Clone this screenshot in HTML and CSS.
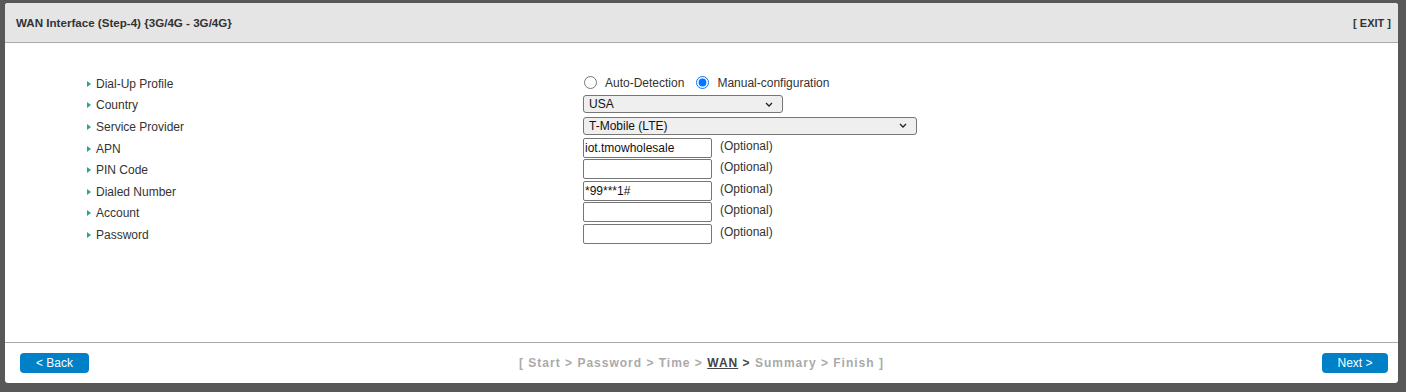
FILE: index.html
```html
<!DOCTYPE html>
<html lang="en">
  <head>
    <meta charset="UTF-8" />
    <title>WAN Interface (Step-4)</title>
    <link rel="stylesheet" href="styles.css">
  </head>
  <body>
    <div class="panel">
      <div class="panel-head">
        <span class="title">WAN Interface (Step-4) {3G/4G - 3G/4G}</span>
        <a class="exit" href="#">[ EXIT ]</a>
      </div>

      <form class="panel-body">
        <div class="form-grid">
          <div class="label">Dial-Up Profile</div>
          <div class="field">
            <label class="radio"><input type="radio" name="profile" /> Auto-Detection</label>
            <label class="radio"><input type="radio" name="profile" checked /> Manual-configuration</label>
          </div>

          <div class="label">Country</div>
          <div class="field">
            <select class="sel country"><option>USA</option></select>
          </div>

          <div class="label">Service Provider</div>
          <div class="field">
            <select class="sel provider"><option>T-Mobile (LTE)</option></select>
          </div>

          <div class="label">APN</div>
          <div class="field">
            <input type="text" class="txt" value="iot.tmowholesale" />
            <span class="opt">(Optional)</span>
          </div>

          <div class="label">PIN Code</div>
          <div class="field">
            <input type="text" class="txt" />
            <span class="opt">(Optional)</span>
          </div>

          <div class="label">Dialed Number</div>
          <div class="field">
            <input type="text" class="txt" value="*99***1#" />
            <span class="opt">(Optional)</span>
          </div>

          <div class="label">Account</div>
          <div class="field">
            <input type="text" class="txt" />
            <span class="opt">(Optional)</span>
          </div>

          <div class="label">Password</div>
          <div class="field">
            <input type="password" class="txt" />
            <span class="opt">(Optional)</span>
          </div>
        </div>
      </form>

      <div class="panel-foot">
        <button class="btn back">&lt; Back</button>
        <div class="steps">
          [ Start &gt; Password &gt; Time &gt; <span class="current">WAN</span> <b>&gt;</b> Summary &gt; Finish ]
        </div>
        <button class="btn">Next &gt;</button>
      </div>
    </div>
  </body>
</html>
```

FILE: styles.css
```css
body {
  margin: 0;
  background: #585858;
  font-family: Arial, "Liberation Sans", sans-serif;
  font-size: 12px;
  color: #222;
}

.panel {
  margin: 3px 8px 9px 5px;
  height: 380px;
  background: #fff;
  border-radius: 3px;
  display: flex;
  flex-direction: column;
  overflow: hidden;
}

.panel-head {
  height: 39px;
  background: #e5e5e5;
  border-bottom: 1px solid #aaa;
  display: flex;
  align-items: center;
  justify-content: space-between;
  padding: 0 7px 0 11px;
}

.title {
  font-size: 11.6px;
  font-weight: bold;
  color: #333;
}

.exit {
  font-size: 11px;
  font-weight: bold;
  color: #333;
  text-decoration: none;
}

.panel-body {
  flex: 1;
  padding: 30px 0 0 82px;
}

.form-grid {
  display: grid;
  grid-template-columns: 496px 1fr;
  grid-auto-rows: 21.6px;
}

.label {
  display: flex;
  align-items: center;
  color: #333;
}

.label::before {
  content: "";
  width: 0;
  height: 0;
  border-top: 3.5px solid transparent;
  border-bottom: 3.5px solid transparent;
  border-left: 4px solid #20a898;
  margin-right: 5px;
}

.field {
  display: flex;
  align-items: center;
  padding-bottom: 2px;
}

.radio {
  display: flex;
  align-items: center;
  margin-right: 11px;
  color: #333;
}

.radio input {
  margin: 0 8px 0 1px;
  width: 13px;
  height: 13px;
}

.sel {
  appearance: none;
  height: 18px;
  font-family: inherit;
  font-size: 12px;
  color: #111;
  background: #efefef url("data:image/svg+xml,%3Csvg xmlns='http://www.w3.org/2000/svg' width='8' height='5' viewBox='0 0 8 5'%3E%3Cpath d='M1 1l3 3 3-3' fill='none' stroke='%23222' stroke-width='1.3'/%3E%3C/svg%3E") no-repeat right 9px center;
  border: 1px solid #767676;
  border-radius: 3px;
  padding: 0 20px 0 5px;
}

.country {
  width: 200px;
}

.provider {
  width: 334px;
}

.txt {
  width: 129px;
  height: 20px;
  box-sizing: border-box;
  border: 1px solid #767676;
  border-radius: 2px;
  padding: 0 1px;
  font-family: inherit;
  font-size: 12px;
  color: #111;
}

.opt {
  margin-left: 8px;
  color: #333;
  position: relative;
  top: -2px;
}

.panel-foot {
  height: 40px;
  border-top: 1px solid #aaa;
  display: flex;
  align-items: center;
  justify-content: space-between;
  padding: 0 10px 0 15px;
}

.btn {
  height: 20px;
  min-width: 66px;
  padding: 0 10px;
  background: #0080c6;
  color: #fff;
  border: none;
  border-radius: 4px;
  font-family: inherit;
  font-size: 12px;
  cursor: pointer;
}

.back {
  min-width: 69px;
}

.steps {
  font-weight: bold;
  letter-spacing: 1px;
  color: #aaa;
  margin-left: -8px;
}

.steps .current {
  color: #444;
  text-decoration: underline;
}

.steps b {
  color: #444;
}
```
